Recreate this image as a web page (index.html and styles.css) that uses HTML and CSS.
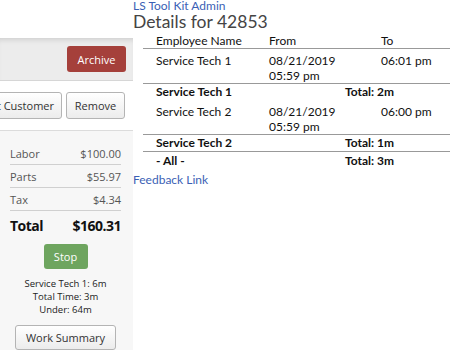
FILE: index.html
```html
<!DOCTYPE html>
<html lang="en">
<head>
    <meta charset="UTF-8">
    <meta name="viewport" content="width=device-width, initial-scale=1.0">
    <title>Details for 42853</title>
    <link rel="stylesheet" href="styles.css">
</head>
<body>

    <div class="page">
        <div class="sidebar">
            <div class="toolbar">
                <button class="btn-archive">Archive</button>
            </div>
            <div class="actions">
                <button class="btn btn-customer">Edit Customer</button>
                <button class="btn btn-remove">Remove</button>
            </div>
            <div class="summary">
                <div class="price-row"><span>Labor</span><span>$100.00</span></div>
                <div class="price-row"><span>Parts</span><span>$55.97</span></div>
                <div class="price-row"><span>Tax</span><span>$4.34</span></div>
                <div class="price-row total"><span>Total</span><span>$160.31</span></div>

                <div class="timer">
                    <button class="btn-stop">Stop</button>
                    <div class="times">
                        Service Tech 1: 6m<br>
                        Total Time: 3m<br>
                        Under: 64m
                    </div>
                    <button class="btn btn-summary">Work Summary</button>
                </div>
            </div>
        </div>

        <div class="main">
            <a href="#" class="admin-link">LS Tool Kit Admin</a>
            <h2>Details for 42853</h2>

            <table class="details">
                <colgroup>
                    <col class="col-name">
                    <col class="col-from">
                    <col>
                </colgroup>
                <thead>
                    <tr>
                        <th>Employee Name</th>
                        <th>From</th>
                        <th>To</th>
                    </tr>
                </thead>
                <tbody>
                    <tr class="entry">
                        <td>Service Tech 1</td>
                        <td>08/21/2019<br>05:59 pm</td>
                        <td>06:01 pm</td>
                    </tr>
                    <tr class="subtotal">
                        <td>Service Tech 1</td>
                        <td colspan="2" class="sum">Total: 2m</td>
                    </tr>
                    <tr class="entry">
                        <td>Service Tech 2</td>
                        <td>08/21/2019<br>05:59 pm</td>
                        <td>06:00 pm</td>
                    </tr>
                    <tr class="subtotal">
                        <td>Service Tech 2</td>
                        <td colspan="2" class="sum">Total: 1m</td>
                    </tr>
                    <tr class="subtotal grand">
                        <td>- All -</td>
                        <td colspan="2" class="sum">Total: 3m</td>
                    </tr>
                </tbody>
            </table>

            <a href="#" class="feedback">Feedback Link</a>
        </div>
    </div>

</body>
</html>
```

FILE: styles.css
```css
body {
    margin: 0;
    font-family: "Open Sans", sans-serif;
    color: #333;
    background-color: #fff;
    overflow: hidden;
}

.page {
    display: flex;
    height: 350px;
}

.sidebar {
    width: 133px;
    flex-shrink: 0;
    overflow: hidden;
    display: flex;
    flex-direction: column;
    padding-top: 38px;
}

.toolbar {
    height: 42px;
    background-color: #ececec;
    box-shadow: inset 0 5px 5px -3px rgba(0, 0, 0, 0.12);
    border-bottom: 1px solid #d6d6d6;
    display: flex;
    justify-content: flex-end;
    align-items: center;
    padding-right: 7px;
}

.btn-archive {
    width: 59px;
    height: 26px;
    background-color: #a5403b;
    color: #fff;
    border: none;
    border-radius: 3px;
    font-family: "Open Sans", sans-serif;
    font-size: 11px;
    padding: 0;
}

.actions {
    height: 49px;
    display: flex;
    justify-content: flex-end;
    align-items: center;
    gap: 4px;
    padding-right: 8px;
    border-bottom: 1px solid #dcdcdc;
}

.btn {
    height: 27px;
    flex-shrink: 0;
    background: linear-gradient(#fff, #ececec);
    border: 1px solid #b4b4b4;
    border-radius: 3px;
    color: #333;
    font-family: "Open Sans", sans-serif;
    font-size: 11px;
    padding: 0 9px;
    white-space: nowrap;
}

.btn-customer {
    padding-right: 7px;
}

.btn-remove {
    width: 59px;
    padding: 0;
}

.summary {
    flex: 1;
    background-color: #f7f7f7;
    padding: 11px 12px 0 10px;
}

.price-row {
    display: flex;
    justify-content: space-between;
    align-items: center;
    height: 22px;
    border-bottom: 1px solid #d0d0d0;
    font-size: 11px;
    color: #555;
}

.price-row.total {
    height: 28px;
    border-bottom: none;
    font-size: 14px;
    letter-spacing: -0.5px;
    font-weight: bold;
    color: #111;
}

.timer {
    display: flex;
    flex-direction: column;
    align-items: center;
    padding-top: 5px;
}

.btn-stop {
    width: 44px;
    height: 25px;
    background-color: #6ea55f;
    color: #fff;
    border: none;
    border-radius: 3px;
    font-family: "Open Sans", sans-serif;
    font-size: 11px;
    padding: 0;
}

.times {
    margin-top: 8px;
    font-size: 9.5px;
    line-height: 13px;
    text-align: center;
    color: #222;
}

.btn-summary {
    margin-top: 9px;
    width: 101px;
    height: 25px;
    padding: 0;
}

.main {
    flex: 1;
    min-width: 0;
    font-family: Lato, sans-serif;
}

.admin-link {
    display: block;
    color: #3b5fb5;
    text-decoration: none;
    font-size: 12px;
    line-height: 12px;
}

h2 {
    margin: 0;
    font-size: 17.5px;
    font-weight: normal;
    color: #444;
    line-height: 19px;
}

.details {
    margin: 2px 0 0 10px;
    width: 330px;
    border-collapse: collapse;
    table-layout: fixed;
    font-size: 12px;
    color: #111;
}

.col-name {
    width: 113px;
}

.col-from {
    width: 112px;
}

.details th {
    text-align: left;
    font-weight: normal;
    line-height: 15px;
    padding: 0 0 0 13px;
    border-bottom: 1px solid #999;
}

.details td {
    text-align: left;
    vertical-align: top;
    line-height: 15px;
    padding: 4px 0 0 13px;
}

.entry td {
    border-bottom: 1px solid #999;
}

.subtotal td {
    font-weight: bold;
    padding: 0 0 1px 13px;
}

.subtotal td.sum {
    padding-left: 89px;
}

.subtotal + .subtotal td {
    border-top: 1px solid #999;
    padding-top: 1px;
}

.feedback {
    display: block;
    margin-top: 3px;
    color: #3b5fb5;
    text-decoration: none;
    font-size: 12px;
}
```
